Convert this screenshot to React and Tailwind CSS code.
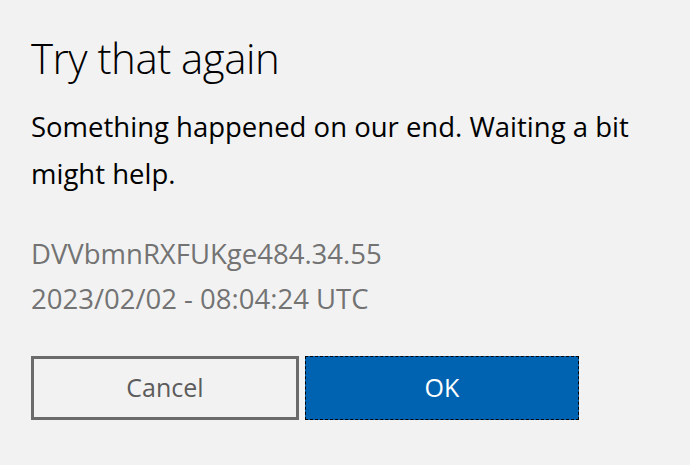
export default function App() {
  return (
    <div
      className="h-[465px] w-[690px] overflow-hidden bg-[#f2f2f2] px-[31px] pt-[32px] text-black"
      style={{ fontFamily: '"Open Sans", "Noto Sans", sans-serif' }}
    >
      <h1 className="text-[42px] font-light leading-[52px] tracking-[-0.5px]">Try that again</h1>
      <p className="mt-[19px] text-[27.5px] leading-[47px]">
        Something happened on our end. Waiting a bit might help.
      </p>
      <div className="mt-[34px] text-[27.5px] leading-[45px] text-[#737373]">
        <p>DVVbmnRXFUKge484.34.55</p>
        <p>2023/02/02 - 08:04:24 UTC</p>
      </div>
      <div className="mt-[35px] flex gap-[6px]">
        <button className="h-[64px] w-[268px] border-[3px] border-[#6b6b6b] bg-[#f2f2f2] text-[25px] text-[#5c5c5c]">
          Cancel
        </button>
        <button className="h-[64px] w-[274px] border border-dashed border-black bg-[#0063b1] text-[25px] text-white">
          OK
        </button>
      </div>
    </div>
  )
}
